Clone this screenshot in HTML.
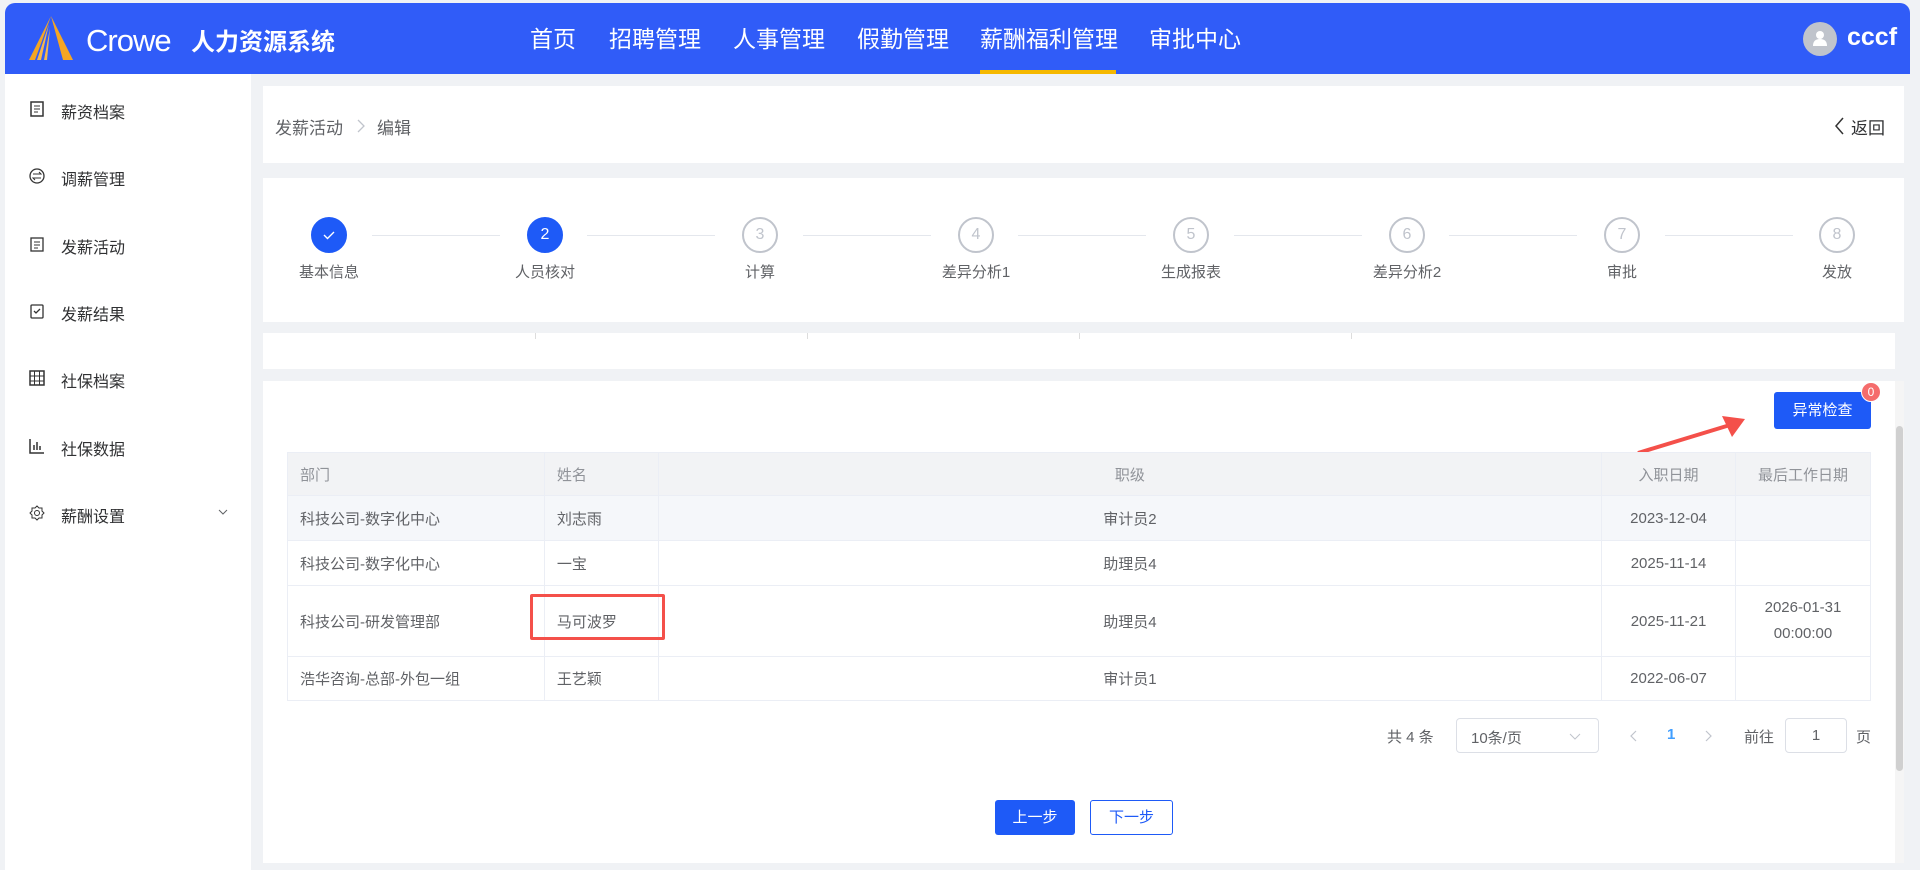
<!DOCTYPE html>
<html><head><meta charset="utf-8"><style>
*{margin:0;padding:0;box-sizing:border-box}
body{width:1920px;height:870px;background:#f0f2f5;font-family:"Liberation Sans","Noto Sans CJK SC",sans-serif;color:#606266;position:relative;overflow:hidden}
.a{position:absolute}
.hdr{left:5px;top:3px;width:1905px;height:71px;background:#305cf8;border-radius:10px 10px 0 0}
.nav{top:20px;font-size:23px;color:#fff;font-family:"Liberation Sans","Noto Sans CJK SC",sans-serif}
.side{left:5px;top:74px;width:246px;height:796px;background:#fff}
.si{left:61px;font-size:16px;color:#303133}
.ic{left:29px;width:16px;height:16px}
.card{background:#fff}
.step{width:36px;height:36px;border-radius:50%;border:2px solid #c0c4cc;color:#c0c4cc;font-size:16px;text-align:center;line-height:32px;top:217px}
.lbl{top:261px;font-size:15px;color:#606266;width:160px;text-align:center}
.ln{top:235px;height:1px;background:#e4e7ed}
table{border-collapse:collapse;font-size:15px;color:#606266}
td,th{border:1px solid #ebeef5;padding:0 12px;text-align:left;font-weight:normal}
th{background:#f2f3f5;color:#909399;height:43px}
</style></head><body>
<div class="a hdr"></div>
<svg class="a" style="left:27px;top:16px" width="48" height="44" viewBox="0 0 48 44"><path d="M24 0 L46 44 L36 44 Z" fill="#f5a623"/><path d="M24 0 L2 44 L8 44 Z" fill="#f5a623"/><path d="M22 8 L10 44 L14 44 Z" fill="#f7b84a"/><path d="M23 12 L17 44 L20 44Z" fill="#f7b84a"/></svg>
<div class="a" style="left:86px;top:23px;font-size:31px;color:#fff;letter-spacing:-1px">Crowe</div>
<div class="a" style="left:191px;top:22px;font-size:24px;color:#fff;font-weight:bold">人力资源系统</div>
<div class="a nav" style="left:530px">首页</div>
<div class="a nav" style="left:609px">招聘管理</div>
<div class="a nav" style="left:733px">人事管理</div>
<div class="a nav" style="left:857px">假勤管理</div>
<div class="a nav" style="left:980px">薪酬福利管理</div>
<div class="a" style="left:980px;top:70px;width:136px;height:4px;background:#f5b800"></div>
<div class="a nav" style="left:1149px">审批中心</div>
<div class="a" style="left:1803px;top:22px;width:34px;height:34px;border-radius:50%;background:#c0c4cc"></div>
<svg class="a" style="left:1811px;top:29px" width="18" height="18" viewBox="0 0 18 18"><circle cx="9" cy="6" r="4" fill="#fff"/><path d="M2 17 Q2 10 9 10 Q16 10 16 17Z" fill="#fff"/></svg>
<div class="a" style="left:1847px;top:23px;font-size:25px;color:#fff;font-weight:bold">cccf</div>

<div class="a side"></div>
<svg class="a ic" style="top:101px" viewBox="0 0 16 16"><rect x="2" y="1" width="12" height="14" fill="none" stroke="#333" stroke-width="1.5"/><path d="M5 5h6M5 8h6M5 11h4" stroke="#333"/></svg>
<div class="a si" style="top:99px">薪资档案</div>
<svg class="a ic" style="top:168px" viewBox="0 0 16 16"><circle cx="8" cy="8" r="7" fill="none" stroke="#333" stroke-width="1.3"/><path d="M4 6h8l-2-2M12 10H4l2 2" fill="none" stroke="#333"/></svg>
<div class="a si" style="top:166px">调薪管理</div>
<svg class="a ic" style="top:236px" viewBox="0 0 16 16"><rect x="2" y="2" width="12" height="13" fill="none" stroke="#333" stroke-width="1.3"/><path d="M5 6h6M5 9h6M5 12h4" stroke="#333"/></svg>
<div class="a si" style="top:234px">发薪活动</div>
<svg class="a ic" style="top:303px" viewBox="0 0 16 16"><rect x="2" y="2" width="12" height="13" rx="1" fill="none" stroke="#333" stroke-width="1.3"/><path d="M5 8l2 2 4-4" fill="none" stroke="#333" stroke-width="1.3"/></svg>
<div class="a si" style="top:301px">发薪结果</div>
<svg class="a ic" style="top:370px" viewBox="0 0 16 16"><rect x="1" y="1" width="14" height="14" fill="none" stroke="#333" stroke-width="1.5"/><path d="M5.5 1v14M10.5 1v14M1 6h14M1 11h14" stroke="#333"/></svg>
<div class="a si" style="top:368px">社保档案</div>
<svg class="a ic" style="top:438px" viewBox="0 0 16 16"><path d="M1 1v14h14M5 12V7M8 12V4M11 12V8" fill="none" stroke="#333" stroke-width="1.5"/></svg>
<div class="a si" style="top:436px">社保数据</div>
<svg class="a ic" style="top:505px" viewBox="0 0 16 16"><circle cx="8" cy="8" r="2.5" fill="none" stroke="#333"/><path d="M8 1l2 2 3 0 0 3 2 2-2 2 0 3-3 0-2 2-2-2-3 0 0-3-2-2 2-2 0-3 3 0z" fill="none" stroke="#333"/></svg>
<div class="a si" style="top:503px">薪酬设置</div>
<svg class="a" style="left:217px;top:507px" width="12" height="10" viewBox="0 0 12 10"><path d="M2 3l4 4 4-4" fill="none" stroke="#606266"/></svg>

<div class="a card" style="left:263px;top:86px;width:1641px;height:77px"></div>
<div class="a" style="left:275px;top:114px;font-size:17px;color:#606266">发薪活动</div>
<svg class="a" style="left:356px;top:118px" width="10" height="16" viewBox="0 0 10 16"><path d="M2 2l6 6-6 6" fill="none" stroke="#c0c4cc" stroke-width="1.3"/></svg>
<div class="a" style="left:377px;top:114px;font-size:17px;color:#606266">编辑</div>
<svg class="a" style="left:1833px;top:116px" width="12" height="20" viewBox="0 0 12 20"><path d="M10 2L3 10l7 8" fill="none" stroke="#333" stroke-width="1.5"/></svg>
<div class="a" style="left:1851px;top:114px;font-size:17px;color:#303133">返回</div>

<div class="a card" style="left:263px;top:178px;width:1641px;height:144px"></div>
<div class="a step" style="left:311px;background:#1e5af7;border-color:#1e5af7"></div>
<svg class="a" style="left:322px;top:229px" width="14" height="12" viewBox="0 0 14 12"><path d="M2 6l3.5 3.5L12 3" fill="none" stroke="#fff" stroke-width="1.4"/></svg>
<div class="a step" style="left:527px;background:#1e5af7;border-color:#1e5af7;color:#fff">2</div>
<div class="a step" style="left:742px">3</div>
<div class="a step" style="left:958px">4</div>
<div class="a step" style="left:1173px">5</div>
<div class="a step" style="left:1389px">6</div>
<div class="a step" style="left:1604px">7</div>
<div class="a step" style="left:1819px">8</div>
<div class="a ln" style="left:372px;width:128px"></div>
<div class="a ln" style="left:587px;width:128px"></div>
<div class="a ln" style="left:803px;width:128px"></div>
<div class="a ln" style="left:1018px;width:128px"></div>
<div class="a ln" style="left:1234px;width:128px"></div>
<div class="a ln" style="left:1449px;width:128px"></div>
<div class="a ln" style="left:1665px;width:128px"></div>
<div class="a lbl" style="left:249px">基本信息</div>
<div class="a lbl" style="left:465px">人员核对</div>
<div class="a lbl" style="left:680px">计算</div>
<div class="a lbl" style="left:896px">差异分析1</div>
<div class="a lbl" style="left:1111px">生成报表</div>
<div class="a lbl" style="left:1327px">差异分析2</div>
<div class="a lbl" style="left:1542px">审批</div>
<div class="a lbl" style="left:1757px">发放</div>

<div class="a card" style="left:263px;top:333px;width:1632px;height:36px"></div>
<div class="a" style="left:535px;top:333px;width:1px;height:6px;background:#ddd"></div>
<div class="a" style="left:807px;top:333px;width:1px;height:6px;background:#ddd"></div>
<div class="a" style="left:1079px;top:333px;width:1px;height:6px;background:#ddd"></div>
<div class="a" style="left:1351px;top:333px;width:1px;height:6px;background:#ddd"></div>

<div class="a card" style="left:263px;top:381px;width:1632px;height:482px"></div>
<div class="a" style="left:1895px;top:381px;width:9px;height:482px;background:#f5f5f5"></div>
<div class="a" style="left:1896px;top:426px;width:7px;height:345px;background:#d0d0d0;border-radius:4px"></div>
<div class="a" style="left:1774px;top:392px;width:97px;height:37px;background:#1e5af7;border-radius:3px;color:#fff;font-size:15px;text-align:center;line-height:37px">异常检查</div>
<div class="a" style="left:1861px;top:382px;width:20px;height:20px;background:#f56c6c;border:1px solid #fff;border-radius:10px;color:#fff;font-size:12px;text-align:center;line-height:18px">0</div>
<svg class="a" style="left:1630px;top:405px" width="130" height="55" viewBox="0 0 130 55"><path d="M8 48 L100 20" stroke="#f4504a" stroke-width="4"/><path d="M115 14 L92 11 L102 32 Z" fill="#f4504a"/></svg>

<table class="a" style="left:287px;top:452px;width:1584px">
<colgroup><col style="width:257px"><col style="width:114px"><col style="width:944px"><col style="width:134px"><col style="width:135px"></colgroup>
<tr><th>部门</th><th>姓名</th><th style="text-align:center">职级</th><th style="text-align:center">入职日期</th><th style="text-align:center">最后工作日期</th></tr>
<tr style="height:45px;background:#f5f7fa"><td>科技公司-数字化中心</td><td>刘志雨</td><td style="text-align:center">审计员2</td><td style="text-align:center">2023-12-04</td><td></td></tr>
<tr style="height:45px"><td>科技公司-数字化中心</td><td>一宝</td><td style="text-align:center">助理员4</td><td style="text-align:center">2025-11-14</td><td></td></tr>
<tr style="height:71px"><td>科技公司-研发管理部</td><td>马可波罗</td><td style="text-align:center">助理员4</td><td style="text-align:center">2025-11-21</td><td style="text-align:center;line-height:26px">2026-01-31<br>00:00:00</td></tr>
<tr style="height:44px"><td>浩华咨询-总部-外包一组</td><td>王艺颖</td><td style="text-align:center">审计员1</td><td style="text-align:center">2022-06-07</td><td></td></tr>
</table>
<div class="a" style="left:530px;top:594px;width:135px;height:46px;border:3px solid #f4504a;border-radius:2px"></div>

<div class="a" style="left:1387px;top:726px;font-size:15px">共 4 条</div>
<div class="a" style="left:1456px;top:718px;width:143px;height:35px;border:1px solid #dcdfe6;border-radius:4px;font-size:15px;padding:8px 0 0 14px">10条/页</div>
<svg class="a" style="left:1569px;top:731px" width="12" height="10" viewBox="0 0 12 10"><path d="M1 3l5 5 5-5" fill="none" stroke="#c0c4cc"/></svg>
<svg class="a" style="left:1629px;top:729px" width="10" height="14" viewBox="0 0 10 14"><path d="M7 2L2 7l5 5" fill="none" stroke="#c0c4cc" stroke-width="1.2"/></svg>
<div class="a" style="left:1667px;top:726px;font-size:15px;color:#409eff;font-weight:bold">1</div>
<svg class="a" style="left:1703px;top:729px" width="10" height="14" viewBox="0 0 10 14"><path d="M3 2l5 5-5 5" fill="none" stroke="#c0c4cc" stroke-width="1.2"/></svg>
<div class="a" style="left:1744px;top:726px;font-size:15px">前往</div>
<div class="a" style="left:1785px;top:718px;width:62px;height:35px;border:1px solid #dcdfe6;border-radius:4px;font-size:15px;text-align:center;line-height:33px">1</div>
<div class="a" style="left:1856px;top:726px;font-size:15px">页</div>

<div class="a" style="left:995px;top:800px;width:80px;height:35px;background:#1e5af7;border-radius:3px;color:#fff;font-size:15px;text-align:center;line-height:35px">上一步</div>
<div class="a" style="left:1090px;top:800px;width:83px;height:35px;border:1px solid #1e5af7;border-radius:3px;color:#1e5af7;font-size:15px;text-align:center;line-height:33px">下一步</div>
</body></html>
